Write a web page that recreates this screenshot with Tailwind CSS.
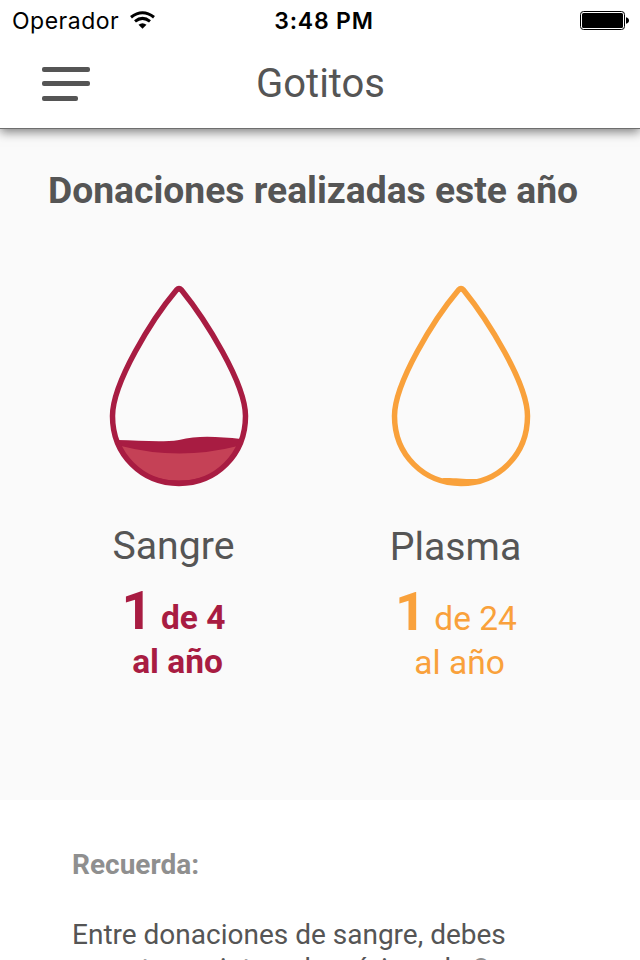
<!DOCTYPE html>
<html lang="es">
<head>
    <meta charset="UTF-8">
    <meta name="viewport" content="width=device-width, initial-scale=1.0">
    <title>Gotitos</title>
    <script src="https://cdn.jsdelivr.net/npm/@tailwindcss/browser@4"></script>
</head>
<body class="h-[960px] overflow-hidden bg-white font-['Roboto',sans-serif] text-[#555]">
    <header class="relative z-10 h-[129px] border-b border-[#6e6e6e] bg-white shadow-[0_3px_10px_rgba(0,0,0,0.5)]">
        <!-- Status bar -->
        <div class="grid h-[42px] grid-cols-3 items-center pl-3 pr-[10px] font-['Inter',sans-serif] text-black">
            <div class="flex items-center gap-[11px]">
                <span class="text-[23px] tracking-[0.5px]">Operador</span>
                <svg class="mb-[3px] h-[18px] w-[25px]" viewBox="0 0 25 18" fill="none" stroke="#000" stroke-width="3">
                    <path d="M1 6.2 Q12.5 -2.8 24 6.2"/>
                    <path d="M5 10.4 Q12.5 4.4 20 10.4"/>
                    <path d="M8.5 13.8 Q12.5 10.8 16.5 13.8 L12.5 17.8Z" fill="#000" stroke="none"/>
                </svg>
            </div>
            <span class="pl-[6px] text-center text-[23px] font-semibold tracking-[0.8px]">3:48 PM</span>
            <svg class="h-[20px] w-[50px] justify-self-end" viewBox="0 0 50 20">
                <rect x="0.5" y="0.5" width="44" height="18" rx="3" fill="none" stroke="#000"/>
                <rect x="2" y="2" width="41" height="15" rx="1.5"/>
                <path d="M46 6.2 Q49 7 49 9.5 Q49 12 46 12.8Z"/>
            </svg>
        </div>
        <!-- Nav bar -->
        <div class="grid h-[83px] grid-cols-[90px_1fr_90px] items-center">
            <div class="flex flex-col gap-[9.5px] pl-[41.5px]">
                <span class="h-[5px] w-[48.5px] rounded-[2px] bg-[#555]"></span>
                <span class="h-[5px] w-[48.5px] rounded-[2px] bg-[#555]"></span>
                <span class="h-[5px] w-[36.5px] rounded-[2px] bg-[#555]"></span>
            </div>
            <h1 class="pl-px text-center text-[40px] leading-[48px]">Gotitos</h1>
        </div>
    </header>

    <main class="h-[671px] bg-[#fafafa] pt-[39px]">
        <h2 class="pl-12 text-[37.25px] leading-[44px] font-bold">Donaciones realizadas este año</h2>
        <div class="mt-[73px] grid grid-cols-[109px_140px_142px_140px] text-center">
            <section class="col-start-2">
                <svg class="h-[202px] w-[140px]" viewBox="0 0 140 202">
                    <path d="M8 155 C30 155 50 158 70 155 C90 150 110 152 132 154 C124 180 100 199 70 199 C40 199 18 180 8 155Z" fill="#a81c42"/>
                    <path d="M12 161 Q70 176 129 161 C118 184 98 195.500 70 195.500 C42 195.500 22 184 12 161Z" fill="#c54156"/>
                    <path d="M67.500 5 C43 34 3.500 98 3.500 131 C3.500 170 33 198.500 70 198.500 C107 198.500 136.500 170 136.500 131 C136.500 98 96 34 72.500 5 Q70 2.500 67.500 5Z" fill="none" stroke="#a81c42" stroke-width="5.5"/>
                </svg>
                <h3 class="mt-[35px] -ml-[11px] text-[39.2px] leading-[48px]">Sangre</h3>
                <p class="mt-[14px] -ml-[11px] text-[33.5px] leading-[54px] font-bold whitespace-nowrap text-[#a81c42]"><span class="text-[54px]">1</span> de 4</p>
                <p class="-mt-[5px] -ml-[3px] text-[33.5px] leading-[44px] font-bold text-[#a81c42]">al año</p>
            </section>
            <section class="col-start-4">
                <svg class="h-[202px] w-[140px]" viewBox="0 0 140 202">
                    <path d="M51 193 C65 192.500 70 194.500 91 194 L80 199 H60Z" fill="#f9a13b"/>
                    <path d="M67.500 5 C43 34 3.500 98 3.500 131 C3.500 170 33 198.500 70 198.500 C107 198.500 136.500 170 136.500 131 C136.500 98 96 34 72.500 5 Q70 2.500 67.500 5Z" fill="none" stroke="#f9a13b" stroke-width="5.5"/>
                </svg>
                <h3 class="mt-[36px] -ml-[11px] text-[39.2px] leading-[48px]">Plasma</h3>
                <p class="mt-[14px] -ml-[10px] text-[33.5px] leading-[54px] whitespace-nowrap text-[#f9a13b]"><span class="text-[54px] font-bold">1</span> de 24</p>
                <p class="-mt-[5px] -ml-[3px] text-[33.5px] leading-[44px] text-[#f9a13b]">al año</p>
            </section>
        </div>
    </main>

    <section class="pt-12 pl-[72px] text-[28px] leading-[34px]">
        <h4 class="font-bold text-[#8f8f8f]">Recuerda:</h4>
        <p class="mt-9 whitespace-nowrap">Entre donaciones de sangre, debes<br>respetar un intervalo mínimo de <b class="text-[#8f8f8f]">8</b></p>
    </section>
</body>
</html>
